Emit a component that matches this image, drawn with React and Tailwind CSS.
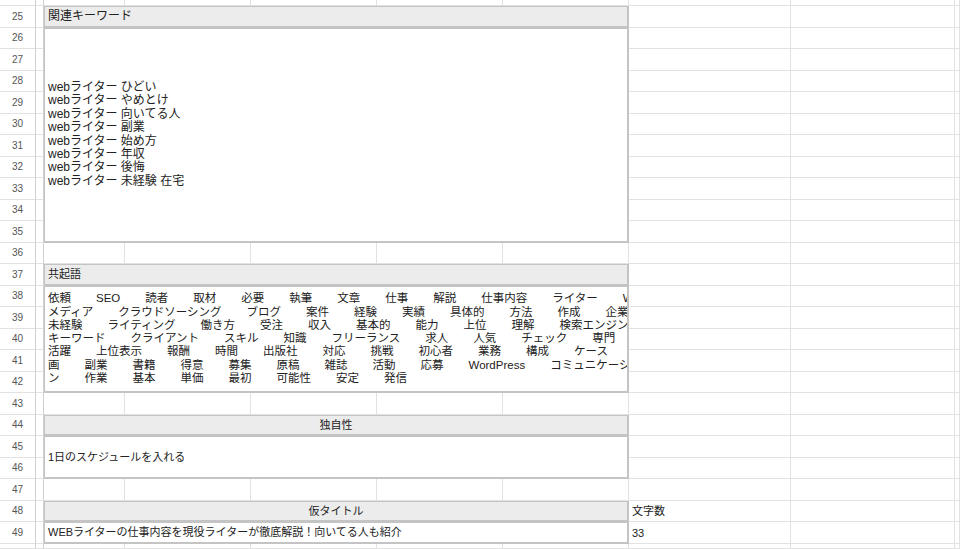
const font = { fontFamily: '"Liberation Sans", "Noto Sans CJK JP", sans-serif' };

const keywords = [
  'webライター ひどい',
  'webライター やめとけ',
  'webライター 向いてる人',
  'webライター 副業',
  'webライター 始め方',
  'webライター 年収',
  'webライター 後悔',
  'webライター 未経験 在宅',
];

const coLines = [
  ['依頼', 'SEO', '読者', '取材', '必要', '執筆', '文章', '仕事', '解説', '仕事内容', 'ライター', 'Web'],
  ['メディア', 'クラウドソーシング', 'ブログ', '案件', '経験', '実績', '具体的', '方法', '作成', '企業'],
  ['未経験', 'ライティング', '働き方', '受注', '収入', '基本的', '能力', '上位', '理解', '検索エンジン'],
  ['キーワード', 'クライアント', 'スキル', '知識', 'フリーランス', '求人', '人気', 'チェック', '専門'],
  ['活躍', '上位表示', '報酬', '時間', '出版社', '対応', '挑戦', '初心者', '業務', '構成', 'ケース', '企'],
  ['画', '副業', '書籍', '得意', '募集', '原稿', '雑誌', '活動', '応募', 'WordPress', 'コミュニケーショ'],
  ['ン', '作業', '基本', '単価', '最初', '可能性', '安定', '発信'],
];

// sheet row -> grid row (row 24 is the partial strip at the top)
const gr = (r) => r - 23;
const sheetRows = Array.from({ length: 27 }, (_, i) => 24 + i);

function Block({ from, to, head = false, className = '', children }) {
  return (
    <div
      className={
        'col-start-3 col-span-5 border border-[#c4c4c4] border-r-2 border-b-2 overflow-hidden ' +
        (head ? 'bg-[#ececec] ' : 'bg-white ') +
        className
      }
      style={{ gridRow: `${gr(from)} / ${gr(to) + 1}` }}
    >
      {children}
    </div>
  );
}

export default function App() {
  return (
    <div
      className="w-[960px] h-[549px] overflow-hidden bg-white text-[11px] text-[#222] grid grid-cols-[36px_8px_81px_126px_126px_126px_126px_162px_164px_1fr] grid-rows-[6px_repeat(25,21.5px)_1fr]"
      style={font}
    >
      {/* base grid */}
      {sheetRows.map((r) => (
        <div
          key={'n' + r}
          className="col-start-1 flex items-center justify-center text-[10px] text-[#555] border-b border-[#e2e2e2] border-r border-r-[#cfcfcf]"
          style={{ gridRow: gr(r) }}
        >
          {r > 24 && r < 50 ? r : ''}
        </div>
      ))}
      {sheetRows.map((r) => (
        <div
          key={'g' + r}
          className="col-start-2 border-b border-[#e2e2e2] border-r border-r-[#cfcfcf]"
          style={{ gridRow: gr(r) }}
        />
      ))}
      {sheetRows.flatMap((r) =>
        [3, 4, 5, 6, 7, 8, 9, 10].map((c) => (
          <div
            key={r + '-' + c}
            className="border-r border-b border-[#e2e2e2]"
            style={{ gridRow: gr(r), gridColumn: c }}
          />
        ))
      )}

      {/* 関連キーワード */}
      <Block from={25} to={25} head className="flex items-center px-[3px] text-[12px]">関連キーワード</Block>
      <Block from={26} to={35} className="flex flex-col justify-center px-[3px] text-[12px] leading-[13.4px]">
        {keywords.map((k) => (
          <div key={k}>{k}</div>
        ))}
      </Block>

      {/* 共起語 */}
      <Block from={37} to={37} head className="flex items-center px-[3px]">共起語</Block>
      <Block from={38} to={42} className="flex flex-col justify-center px-[3px] text-[11.5px] leading-[13.3px]">
        {coLines.map((line, i) => (
          <div key={i} className={'flex gap-[25px] whitespace-nowrap ' + (i === 0 || i === 1 || i === 4 || i === 5 ? 'justify-between' : '')}>
            {line.map((w, j) => (
              <span key={j}>{w}</span>
            ))}
          </div>
        ))}
      </Block>

      {/* 独自性 */}
      <Block from={44} to={44} head className="flex items-center justify-center">独自性</Block>
      <Block from={45} to={46} className="flex items-center px-[3px]">1日のスケジュールを入れる</Block>

      {/* 仮タイトル */}
      <Block from={48} to={48} head className="flex items-center justify-center">仮タイトル</Block>
      <Block from={49} to={49} className="flex items-center px-[3px]">WEBライターの仕事内容を現役ライターが徹底解説！向いてる人も紹介</Block>
      <div className="col-start-8 flex items-center px-[3px]" style={{ gridRow: gr(48) }}>文字数</div>
      <div className="col-start-8 flex items-center px-[3px]" style={{ gridRow: gr(49) }}>33</div>
    </div>
  );
}
